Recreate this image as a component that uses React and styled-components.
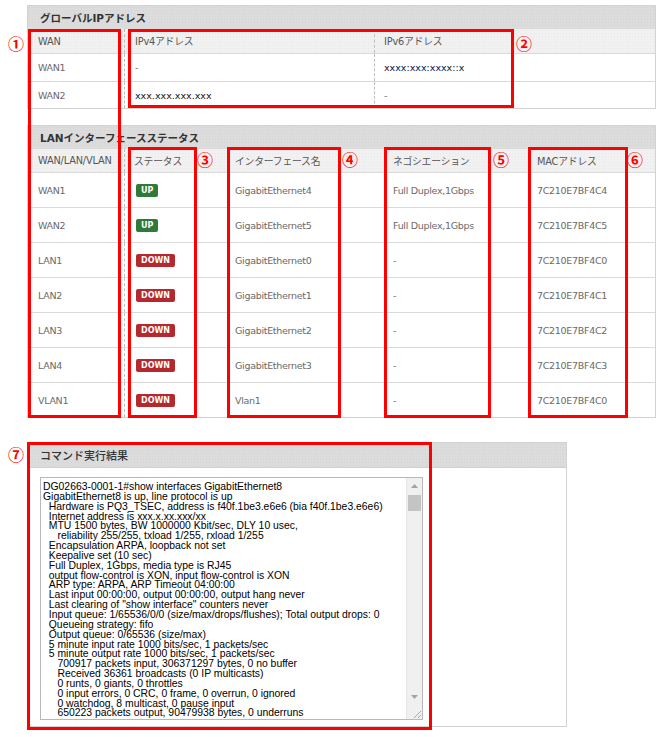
import React from "react";
import styled, { createGlobalStyle } from "styled-components";

const GlobalStyle = createGlobalStyle`
  body {
    margin: 0;
    background: #fff;
    font-family: "DejaVu Sans", "Noto Sans CJK JP", sans-serif;
  }
`;

const Page = styled.div`
  position: relative;
  width: 670px;
  height: 737px;
  box-sizing: border-box;
  padding: 5px 0 0 27px;
  overflow: hidden;
`;

const Panel = styled.section`
  width: ${(p) => p.$w}px;
  box-sizing: border-box;
  border: 1px solid #d2d2d2;
  margin-bottom: ${(p) => p.$mb || 0}px;
  background: #fff;
`;

const PanelHead = styled.h2`
  margin: 0;
  height: ${(p) => p.$h || 22}px;
  box-sizing: border-box;
  display: flex;
  align-items: center;
  padding-left: 12px;
  font-size: ${(p) => (p.$light ? 11 : 10.5)}px;
  font-weight: ${(p) => (p.$light ? 500 : 700)};
  color: #333;
  background-color: #dcdcdc;
  background-image: radial-gradient(#d2d2d2 0.6px, transparent 0.8px);
  background-size: 3px 3px;
  border-bottom: ${(p) => (p.$light ? "1px solid #cfcfcf" : "none")};
`;

const Row = styled.div`
  display: grid;
  grid-template-columns: ${(p) => p.$cols};
  height: ${(p) => p.$h}px;
  box-sizing: border-box;
  border-top: 1px solid #dadada;
  background-color: ${(p) => (p.$head ? "#f1f1f1" : "#fff")};
  background-image: ${(p) =>
    p.$head ? "radial-gradient(#e8e8e8 0.6px, transparent 0.8px)" : "none"};
  background-size: 3px 3px;
`;

const Cell = styled.div`
  display: flex;
  align-items: center;
  padding-left: ${(p) => p.$pl || 9}px;
  border-left: ${(p) => (p.$sep ? "1px dashed #bdbdbd" : "none")};
  font-size: 9.5px;
  letter-spacing: -0.3px;
  color: #6a6a6a;
  white-space: nowrap;
  overflow: hidden;
`;

const HeadCell = styled(Cell)`
  font-size: 9.8px;
  letter-spacing: -0.2px;
  color: #555;
`;

const Addr = styled.span`
  font-size: 9.5px;
  letter-spacing: 0;
  color: #11113a;
`;

const Badge = styled.span`
  display: inline-flex;
  align-items: center;
  justify-content: center;
  height: 13px;
  padding: 0 5px;
  border-radius: 2px;
  font-size: 8px;
  font-weight: 700;
  letter-spacing: 0;
  color: #fff;
  background: ${(p) => (p.$up ? "#2f7a3a" : "#b3292e")};
`;

const CmdBody = styled.div`
  padding: 9px 0 6px 12px;
`;

const OutputBox = styled.div`
  display: flex;
  width: 383px;
  height: 243px;
  box-sizing: border-box;
  border: 1px solid #b8b8b8;
  background: #fff;
`;

const Log = styled.pre`
  flex: 1;
  margin: 0;
  padding: 4px 2px 0;
  overflow: hidden;
  font-family: "Liberation Sans", "Noto Sans CJK JP", sans-serif;
  font-size: 10.4px;
  line-height: 9.85px;
  color: #000;
  white-space: pre-wrap;
`;

const ScrollBar = styled.div`
  width: 15px;
  display: flex;
  flex-direction: column;
  background: #f0f0f0;
  border-left: 1px solid #e6e6e6;
`;

const ScrollBtn = styled.div`
  height: 15px;
  display: flex;
  align-items: center;
  justify-content: center;
`;

const Track = styled.div`
  flex: 1;
  padding-top: 2px;
`;

const Thumb = styled.div`
  height: 16px;
  margin: 0 1px;
  background: #c4c4c4;
`;

const Grip = styled.div`
  height: 15px;
  display: flex;
  align-items: flex-end;
  justify-content: flex-end;
  background: #f0f0f0;
`;

const Mark = styled.div`
  position: absolute;
  left: ${(p) => p.$x}px;
  top: ${(p) => p.$y}px;
  width: ${(p) => p.$w}px;
  height: ${(p) => p.$h}px;
  box-sizing: border-box;
  border: 3px solid #f00;
  pointer-events: none;
`;

const Num = styled.span`
  position: absolute;
  left: ${(p) => p.$x}px;
  top: ${(p) => p.$y}px;
  font-family: "Noto Sans CJK JP", sans-serif;
  font-size: 16px;
  font-weight: 700;
  line-height: 1;
  color: #f00;
`;

const Arrow = ({ down }) => (
  <svg width="7" height="4" viewBox="0 0 7 4">
    <path d={down ? "M0 0H7L3.5 4Z" : "M0 4H7L3.5 0Z"} fill="#a3a3a3" />
  </svg>
);

const ipCols = "96px 250px 1fr";
const lanCols = "96px 102px 158px 143px 1fr";

const lanRows = [
  ["WAN1", true, "GigabitEthernet4", "Full Duplex,1Gbps", "7C210E7BF4C4"],
  ["WAN2", true, "GigabitEthernet5", "Full Duplex,1Gbps", "7C210E7BF4C5"],
  ["LAN1", false, "GigabitEthernet0", "-", "7C210E7BF4C0"],
  ["LAN2", false, "GigabitEthernet1", "-", "7C210E7BF4C1"],
  ["LAN3", false, "GigabitEthernet2", "-", "7C210E7BF4C2"],
  ["LAN4", false, "GigabitEthernet3", "-", "7C210E7BF4C3"],
  ["VLAN1", false, "Vlan1", "-", "7C210E7BF4C0"],
];

const output = `DG02663-0001-1#show interfaces GigabitEthernet8
GigabitEthernet8 is up, line protocol is up
  Hardware is PQ3_TSEC, address is f40f.1be3.e6e6 (bia f40f.1be3.e6e6)
  Internet address is xxx.x.xx.xxx/xx
  MTU 1500 bytes, BW 1000000 Kbit/sec, DLY 10 usec,
     reliability 255/255, txload 1/255, rxload 1/255
  Encapsulation ARPA, loopback not set
  Keepalive set (10 sec)
  Full Duplex, 1Gbps, media type is RJ45
  output flow-control is XON, input flow-control is XON
  ARP type: ARPA, ARP Timeout 04:00:00
  Last input 00:00:00, output 00:00:00, output hang never
  Last clearing of "show interface" counters never
  Input queue: 1/65536/0/0 (size/max/drops/flushes); Total output drops: 0
  Queueing strategy: fifo
  Output queue: 0/65536 (size/max)
  5 minute input rate 1000 bits/sec, 1 packets/sec
  5 minute output rate 1000 bits/sec, 1 packets/sec
     700917 packets input, 306371297 bytes, 0 no buffer
     Received 36361 broadcasts (0 IP multicasts)
     0 runts, 0 giants, 0 throttles
     0 input errors, 0 CRC, 0 frame, 0 overrun, 0 ignored
     0 watchdog, 8 multicast, 0 pause input
     650223 packets output, 90479938 bytes, 0 underruns`;

export default function App() {
  return (
    <>
      <GlobalStyle />
      <Page>
        <Panel $w={629} $mb={16}>
          <PanelHead>グローバルIPアドレス</PanelHead>
          <Row $cols={ipCols} $h={25} $head>
            <HeadCell $pl={10}>WAN</HeadCell>
            <HeadCell $sep $pl={10}>IPv4アドレス</HeadCell>
            <HeadCell $sep>IPv6アドレス</HeadCell>
          </Row>
          <Row $cols={ipCols} $h={28}>
            <Cell $pl={10}>WAN1</Cell>
            <Cell $sep $pl={10}>-</Cell>
            <Cell $sep>
              <Addr>xxxx:xxx:xxxx::x</Addr>
            </Cell>
          </Row>
          <Row $cols={ipCols} $h={27}>
            <Cell $pl={10}>WAN2</Cell>
            <Cell $sep $pl={10}>
              <Addr>xxx.xxx.xxx.xxx</Addr>
            </Cell>
            <Cell $sep>-</Cell>
          </Row>
        </Panel>

        <Panel $w={629} $mb={24}>
          <PanelHead>LANインターフェースステータス</PanelHead>
          <Row $cols={lanCols} $h={24} $head>
            <HeadCell $pl={10}>WAN/LAN/VLAN</HeadCell>
            <HeadCell $sep>ステータス</HeadCell>
            <HeadCell>インターフェース名</HeadCell>
            <HeadCell>ネゴシエーション</HeadCell>
            <HeadCell $pl={10}>MACアドレス</HeadCell>
          </Row>
          {lanRows.map(([name, up, iface, nego, mac]) => (
            <Row key={name} $cols={lanCols} $h={35}>
              <Cell $pl={10}>{name}</Cell>
              <Cell $sep $pl={11}>
                <Badge $up={up}>{up ? "UP" : "DOWN"}</Badge>
              </Cell>
              <Cell>{iface}</Cell>
              <Cell>{nego}</Cell>
              <Cell $pl={10}>{mac}</Cell>
            </Row>
          ))}
        </Panel>

        <Panel $w={540}>
          <PanelHead $h={25} $light>
            コマンド実行結果
          </PanelHead>
          <CmdBody>
            <OutputBox>
              <Log>{output}</Log>
              <ScrollBar>
                <ScrollBtn>
                  <Arrow />
                </ScrollBtn>
                <Track>
                  <Thumb />
                </Track>
                <ScrollBtn>
                  <Arrow down />
                </ScrollBtn>
                <Grip>
                  <svg width="12" height="12" viewBox="0 0 12 12">
                    <path
                      d="M11 4L4 11M11 8L8 11"
                      stroke="#a8a8a8"
                      strokeWidth="1"
                    />
                  </svg>
                </Grip>
              </ScrollBar>
            </OutputBox>
          </CmdBody>
        </Panel>

        <Mark $x={28} $y={29} $w={93} $h={389} />
        <Mark $x={128} $y={29} $w={386} $h={79} />
        <Mark $x={128} $y={147} $w={69} $h={271} />
        <Mark $x={227} $y={147} $w={114} $h={271} />
        <Mark $x={384} $y={147} $w={107} $h={271} />
        <Mark $x={528} $y={147} $w={100} $h={271} />
        <Mark $x={27} $y={442} $w={405} $h={288} />

        <Num $x={8} $y={35}>①</Num>
        <Num $x={516} $y={35}>②</Num>
        <Num $x={197} $y={151}>③</Num>
        <Num $x={342} $y={151}>④</Num>
        <Num $x={493} $y={151}>⑤</Num>
        <Num $x={627} $y={151}>⑥</Num>
        <Num $x={8} $y={446}>⑦</Num>
      </Page>
    </>
  );
}
